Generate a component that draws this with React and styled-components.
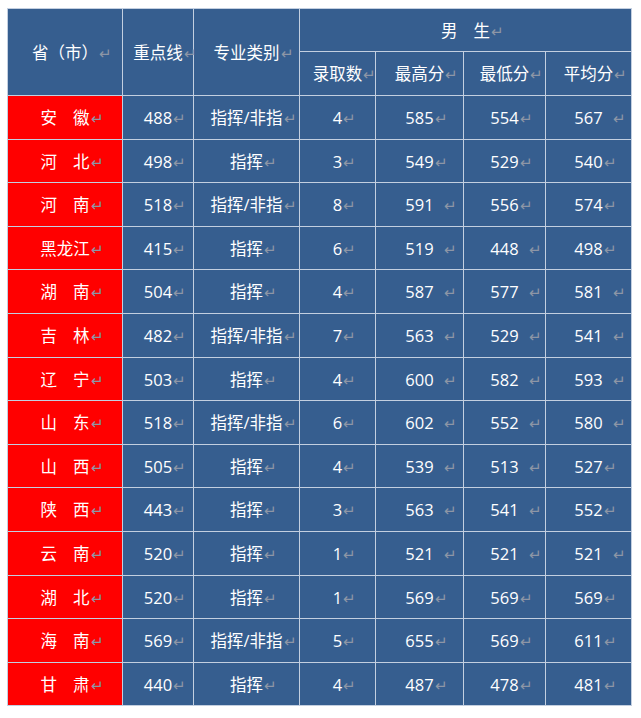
import React from 'react';
import styled, { createGlobalStyle } from 'styled-components';

const GlobalStyle = createGlobalStyle`
  html, body {
    margin: 0;
    padding: 0;
    background: #ffffff;
  }
  body {
    font-family: "Open Sans", "Noto Sans CJK SC", sans-serif;
  }
`;

const Page = styled.div`
  padding: 8px 0 0 7px;
`;

const Table = styled.table`
  border-collapse: collapse;
  table-layout: fixed;
  width: 624px;
  background: #365e8f;
  color: #ffffff;
  font-size: 16.5px;
  border: 1px solid #c3cfe0;
`;

const Cell = styled.td`
  border: 1px solid #c3cfe0;
  padding: 2px 0 0;
  text-align: center;
  vertical-align: middle;
  white-space: nowrap;
  font-weight: 400;
  height: ${p => p.$h || 40}px;
  background: ${p => (p.$red ? '#ff0000' : 'transparent')};
  line-height: 1;
`;

const Label = styled.span`
  position: relative;
  display: inline-block;
`;

/* Word paragraph mark: hangs after the text, not counted in centering */
const Mark = styled.span`
  position: absolute;
  left: 100%;
  top: 1px;
  margin-left: ${p => p.$space || 1}px;
  color: #8d96a6;
  font-size: 15px;
`;

const Gap = styled.span`
  display: inline-block;
  width: ${p => p.$w}px;
`;

const widths = [115, 71, 106, 76, 88, 82, 86];

const rows = [
  ['安', '徽', '488', '指挥/非指', '4', '585', '554', '567 '],
  ['河', '北', '498', '指挥', '3', '549', '529', '540'],
  ['河', '南', '518', '指挥/非指', '8', '591 ', '556', '574'],
  ['黑龙江', '', '415', '指挥', '6', '519 ', '448 ', '498'],
  ['湖', '南', '504', '指挥', '4', '587 ', '577 ', '581 '],
  ['吉', '林', '482', '指挥/非指', '7', '563 ', '529 ', '541 '],
  ['辽', '宁', '503', '指挥', '4', '600 ', '582 ', '593 '],
  ['山', '东', '518', '指挥/非指', '6', '602 ', '552 ', '580 '],
  ['山', '西', '505', '指挥', '4', '539 ', '513 ', '527'],
  ['陕', '西', '443', '指挥', '3', '563 ', '541 ', '552'],
  ['云', '南', '520', '指挥', '1', '521 ', '521 ', '521 '],
  ['湖', '北', '520', '指挥', '1', '569', '569', '569'],
  ['海', '南', '569', '指挥/非指', '5', '655', '569', '611'],
  ['甘', '肃', '440', '指挥', '4', '487', '478', '481'],
];

const Txt = ({ children, space }) => (
  <Label>
    {children}
    <Mark $space={space}>↵</Mark>
  </Label>
);

const Province = ({ a, b }) =>
  b ? (
    <Txt>
      {a}
      <Gap $w={16} />
      {b}
    </Txt>
  ) : (
    <Txt>{a}</Txt>
  );

const Num = ({ v }) => <Txt space={v.endsWith(' ') ? 10 : 1}>{v.trim()}</Txt>;

export default function App() {
  return (
    <Page>
      <GlobalStyle />
      <Table>
        <colgroup>
          {widths.map((w, i) => (
            <col key={i} style={{ width: w }} />
          ))}
        </colgroup>
        <thead>
          <tr>
            <Cell as="th" rowSpan={2}>
              <Txt>省（市）</Txt>
            </Cell>
            <Cell as="th" rowSpan={2}>
              <Txt>重点线</Txt>
            </Cell>
            <Cell as="th" rowSpan={2}>
              <Txt>专业类别</Txt>
            </Cell>
            <Cell as="th" colSpan={4} $h={40}>
              <Txt>
                男<Gap $w={16} />生
              </Txt>
            </Cell>
          </tr>
          <tr>
            {['录取数', '最高分', '最低分', '平均分'].map(t => (
              <Cell as="th" key={t} $h={41}>
                <Txt>{t}</Txt>
              </Cell>
            ))}
          </tr>
        </thead>
        <tbody>
          {rows.map((r, i) => (
            <tr key={i}>
              <Cell $red $h={40.6}>
                <Province a={r[0]} b={r[1]} />
              </Cell>
              <Cell $h={40.6}>
                <Txt>{r[2]}</Txt>
              </Cell>
              <Cell $h={40.6}>
                <Txt>{r[3]}</Txt>
              </Cell>
              {r.slice(4).map((v, j) => (
                <Cell key={j} $h={40.6}>
                  <Num v={v} />
                </Cell>
              ))}
            </tr>
          ))}
        </tbody>
      </Table>
    </Page>
  );
}
